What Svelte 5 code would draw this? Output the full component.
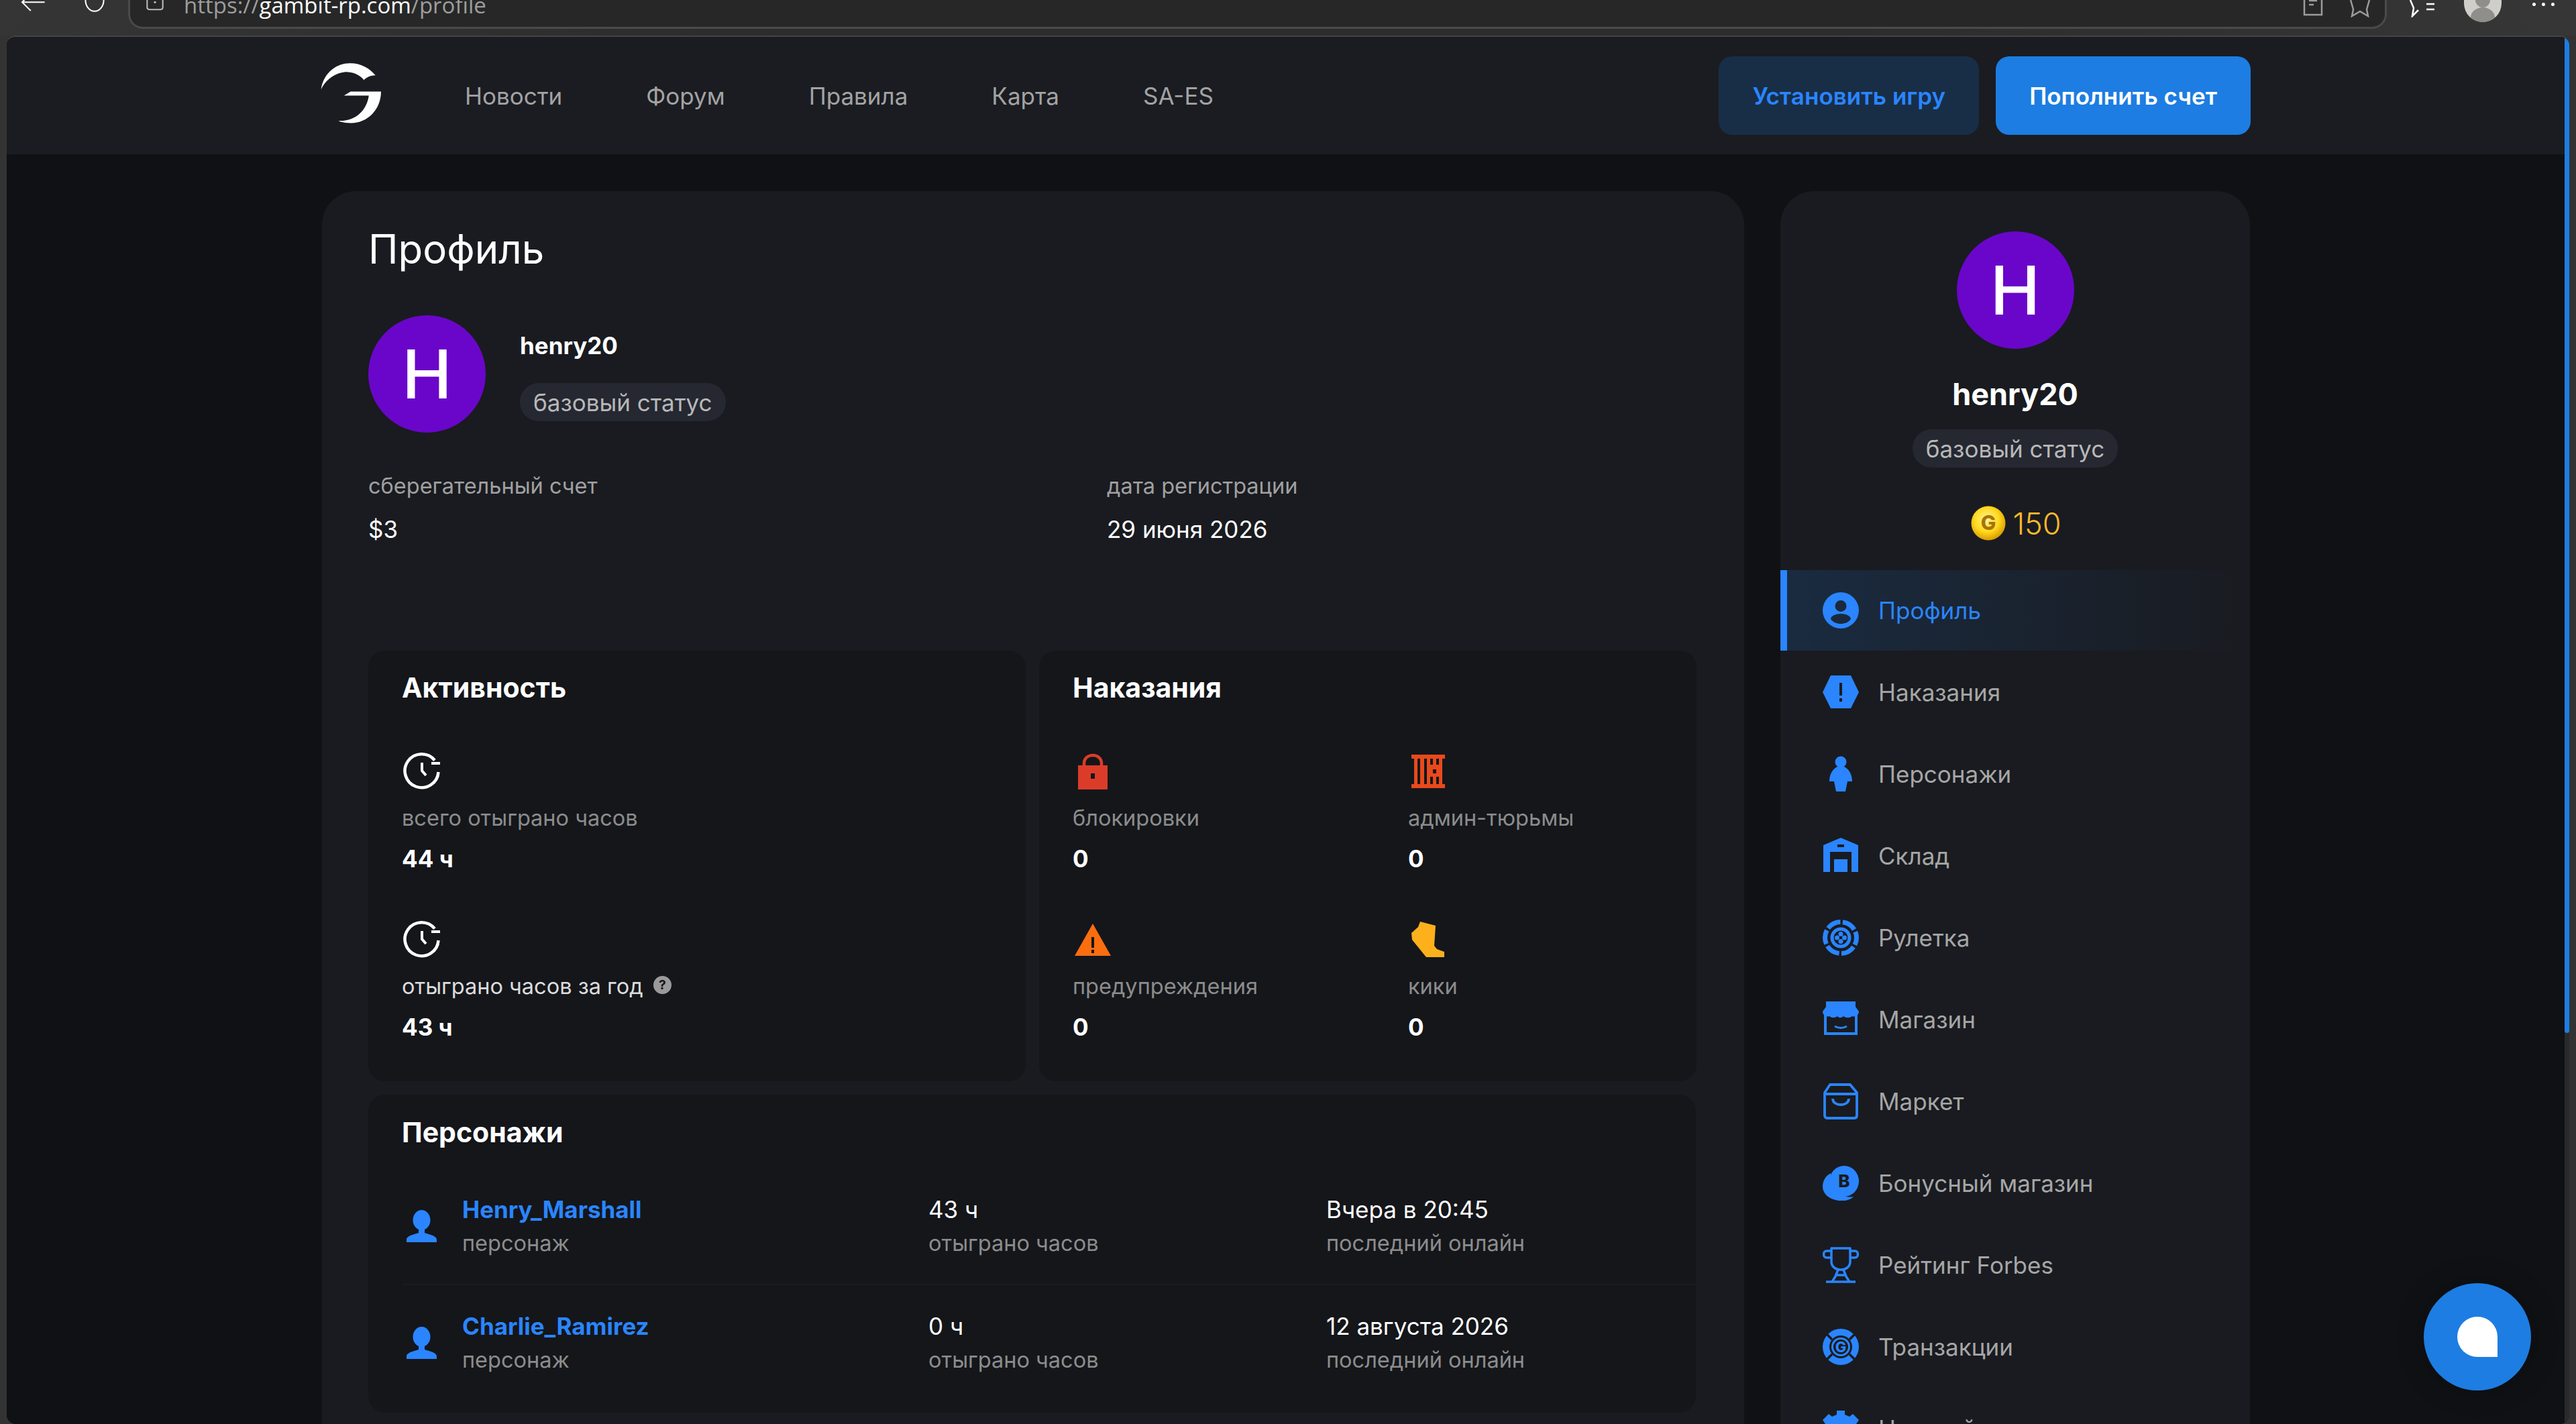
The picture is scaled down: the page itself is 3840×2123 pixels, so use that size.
<script>
  const menu = ['Новости', 'Форум', 'Правила', 'Карта', 'SA-ES'];
  const side = [
    { k: 'profile', t: 'Профиль', active: true },
    { k: 'ban', t: 'Наказания' },
    { k: 'person', t: 'Персонажи' },
    { k: 'store', t: 'Склад' },
    { k: 'chip', t: 'Рулетка' },
    { k: 'shop', t: 'Магазин' },
    { k: 'bag', t: 'Маркет' },
    { k: 'bonus', t: 'Бонусный магазин' },
    { k: 'cup', t: 'Рейтинг Forbes' },
    { k: 'tx', t: 'Транзакции' },
    { k: 'gear', t: 'Настройки' }
  ];
  const chars = [
    { n: 'Henry_Marshall', h: '43 ч', l: 'Вчера в 20:45' },
    { n: 'Charlie_Ramirez', h: '0 ч', l: '12 августа 2026' }
  ];
  const pun = [
    { k: 'lock', t: 'блокировки' },
    { k: 'jail', t: 'админ-тюрьмы' },
    { k: 'warn', t: 'предупреждения' },
    { k: 'kick', t: 'кики' }
  ];
</script>

{#snippet clock()}
  <svg class="ico60" viewBox="-3 -3 60 60" fill="none" stroke="#fff" stroke-width="4.5">
    <path d="M51.5 28A25 25 0 1 1 46 10.5" />
    <path d="M41 15H54M27 14V26L33 33" stroke-width="4" />
  </svg>
{/snippet}

{#snippet punIcon(k)}
  {#if k === 'lock'}
    <svg class="ico60" viewBox="0 0 60 60">
      <path fill="#db3c29" fill-rule="evenodd" d="M8 21H52V57H8ZM27 33V41H33V33Z" />
      <path fill="none" stroke="#db3c29" stroke-width="4.5" d="M17 22V15C17 -1 43 -1 43 15V22" transform="translate(0 3)" />
    </svg>
  {:else if k === 'jail'}
    <svg class="ico60" viewBox="0 0 60 60">
      <path fill="#e8491d" fill-rule="evenodd" d="M5 5H55V11H51V49H55V55H5V49H9V11H5ZM14 11V49H18V11ZM24 11V49H28V11ZM33 11V20H37V11ZM42 11V20H46V11ZM33 38V49H37V38ZM42 38V49H46V38ZM37 27H42V33H37Z" />
    </svg>
  {:else if k === 'warn'}
    <svg class="ico60" viewBox="0 0 60 60">
      <path fill="#fb6e10" fill-rule="evenodd" d="M30 6L57 54H3ZM28 26V42H32V26ZM28 45V50H32V45Z" />
    </svg>
  {:else}
    <svg class="ico60" viewBox="-5 -3 60 60">
      <path fill="#fcb01b" d="M13 0L36 6L34 36L38 41L49 45V53H22L1 27L0 17L10 8Z" />
    </svg>
  {/if}
{/snippet}

{#snippet navIcon(k)}
  <svg class="ico54" viewBox="0 0 54 54" fill="#2a85ff">
    {#if k === 'profile'}
      <path fill-rule="evenodd" d="M27 0A27 27 0 1 1 27 54A27 27 0 1 1 27 0ZM27 12A8.5 8.5 0 1 0 27 29A8.5 8.5 0 1 0 27 12ZM27 32C18 32 12 36 12 40C16 45 21 47 27 47C33 47 38 45 42 40C42 36 36 32 27 32Z" />
    {:else if k === 'ban'}
      <path fill-rule="evenodd" d="M12 2H42L54 27L42 51H12L0 27ZM25 13V32H29V13ZM25 36V41H29V36Z" />
    {:else if k === 'person'}
      <circle cx="27" cy="9" r="8.5" />
      <path d="M22 16C16 19 10 26 10 38H17L20 53H34L37 38H44C44 26 38 19 32 16Z" />
    {:else if k === 'store'}
      <path fill-rule="evenodd" d="M27 0L53 11V51H43V21H11V51H1V11ZM22 10V14H32V10Z" />
      <rect x="17" y="32" width="20" height="19" />
    {:else if k === 'chip'}
      <g fill="none" stroke="#2a85ff">
        <circle cx="27" cy="27" r="23.5" stroke-width="7" stroke-dasharray="21 3.6" stroke-dashoffset="10" />
        <circle cx="27" cy="27" r="13" stroke-width="5" />
      </g>
      <circle cx="21.500" cy="27" r="3.500" /><circle cx="32.500" cy="27" r="3.500" />
      <circle cx="27" cy="21.500" r="3.500" /><circle cx="27" cy="32.500" r="3.500" />
    {:else if k === 'shop'}
      <path d="M5 0H49V8L54 15C54 20 49 24 44 22C40 25 35 25 31 22C28 25 24 25 22 22C18 25 14 25 10 22C5 24 0 20 0 15L5 8Z" />
      <g fill="none" stroke="#2a85ff">
        <path d="M4 18V48H50V18" stroke-width="4" />
        <path d="M18 37Q27 42 36 37" stroke-width="3" />
      </g>
    {:else if k === 'bag'}
      <g fill="none" stroke="#2a85ff" stroke-width="3.800">
        <path d="M3 14L11 2H41L51 14V48Q51 52 47 52H7Q3 52 3 48Z" stroke-linejoin="round" />
        <path d="M3 16H51M15 23C15 35 39 35 39 23" />
      </g>
    {:else if k === 'bonus'}
      <path d="M12 12C4 16 0 24 0 32C0 46 16 54 30 53C36 53 42 51 46 47C30 50 10 40 12 12Z" />
      <ellipse cx="32" cy="24" rx="22" ry="23" />
      <text x="32" y="33" text-anchor="middle" class="coin-b">B</text>
    {:else if k === 'cup'}
      <g fill="none" stroke="#2a85ff" stroke-width="3.500" stroke-linejoin="round">
        <path d="M13 2H41V22C41 30 34 34 27 34C20 34 13 30 13 22Z" />
        <path d="M13 6H6C0 6 0 16 6 16H13M41 6H48C54 6 54 16 48 16H41" />
        <path d="M23 34L19 44L14 52M31 34L35 44L40 52M20 42H34M5 52H49" />
      </g>
    {:else if k === 'tx'}
      <circle cx="27" cy="27" r="27" />
      <g stroke="#191b20" stroke-width="3.500">
        <path d="M5 7L14 16M49 7L40 16M5 47L14 38M49 47L40 38" />
      </g>
      <circle cx="27" cy="27" r="17" fill="#191b20" />
      <circle cx="27" cy="27" r="14" />
      <circle cx="27" cy="27" r="11" fill="#191b20" />
      <text x="27" y="35" text-anchor="middle" class="coin-g">G</text>
    {:else}
      <path d="M21 0H33V6L40 9L45 5L54 14L50 20L54 27V33H0V27L4 20L0 14L9 5L14 9L21 6Z" />
    {/if}
  </svg>
{/snippet}

<div class="browser">
  <div class="toolbar">
    <svg class="t-back" viewBox="0 0 44 30" fill="none" stroke="#fff" stroke-width="2.500"><path d="M44 4H2M18 -12L2 4L18 20" /></svg>
    <svg class="t-reload" viewBox="0 0 38 30" fill="none" stroke="#fff" stroke-width="2.500"><path d="M2 0A17 21 0 0 0 36 0" /></svg>
    <div class="address">
      <svg class="t-site" viewBox="0 0 32 24" fill="none" stroke="#b9b9b9" stroke-width="2.500"><path d="M2 0V13Q2 17 6 17H26Q30 17 30 13V0" /><circle cx="16" cy="4" r="2" fill="#b9b9b9" stroke="none" /></svg>
      <span class="url"><i>https://</i>gambit-rp.com<i>/profile</i></span>
      <svg class="t-doc" viewBox="0 0 30 26" fill="none" stroke="#9c9c9c" stroke-width="2.500"><path d="M2 0V22H28V0M9 1H21M9 7H16" /></svg>
      <svg class="t-star" viewBox="0 0 40 26" fill="none" stroke="#9c9c9c" stroke-width="2.500"><path d="M6 0L10 14L8 24L20 17L32 24L30 14L34 0" /></svg>
    </div>
    <svg class="t-fav" viewBox="0 0 40 26" fill="none" stroke="#fff" stroke-width="2.500"><path d="M2 0L7 12L5 24L14 15M26 6H38M26 14H38" /></svg>
    <div class="t-avatar"><span></span><b></b></div>
    <div class="t-dots"><u></u><u></u><u></u></div>
  </div>

  <div class="pane">
    <div class="page">
      <header class="head">
        <div class="head-in">
          <svg class="logo" viewBox="113 100 272 272" fill="#fff">
            <path d="M115 220C125 150 180 102 245 102C295 102 335 125 360 157C340 158 322 164 308 178C285 150 250 140 220 142C170 148 130 185 115 220Z" />
            <path d="M218 248L248 230H385C385 310 325 372 250 372C225 372 205 368 192 362C265 365 320 320 330 248Z" />
          </svg>
          <nav class="menu">
            {#each menu as m}<span>{m}</span>{/each}
          </nav>
          <div class="btns">
            <span class="btn ghost">Установить игру</span>
            <span class="btn solid">Пополнить счет</span>
          </div>
        </div>
      </header>

      <div class="body">
        <main class="card main">
          <h1>Профиль</h1>
          <div class="user">
            <div class="avatar">H</div>
            <div class="who">
              <div class="uname">henry20</div>
              <div class="pill">базовый статус</div>
            </div>
          </div>
          <div class="meta">
            <div><div class="lab lab-a">сберегательный счет</div><div class="val">$3</div></div>
            <div><div class="lab lab-a">дата регистрации</div><div class="val">29 июня 2026</div></div>
          </div>

          <div class="two">
            <section class="inner box">
              <h2>Активность</h2>
              <div class="stats">
                <div class="stat">
                  {@render clock()}
                  <div class="lab">всего отыграно часов</div>
                  <div class="num">44 ч</div>
                </div>
                <div class="stat wide">
                  {@render clock()}
                  <div class="lab light">отыграно часов за год
                    <svg class="hint" viewBox="0 0 28 28"><circle cx="14" cy="14" r="14" fill="#9a9a9a" /><text x="14" y="21" text-anchor="middle" class="hint-q">?</text></svg>
                  </div>
                  <div class="num">43 ч</div>
                </div>
              </div>
            </section>
            <section class="inner box">
              <h2>Наказания</h2>
              <div class="stats">
                {#each pun as p}
                  <div class="stat">
                    {@render punIcon(p.k)}
                    <div class="lab">{p.t}</div>
                    <div class="num">0</div>
                  </div>
                {/each}
              </div>
            </section>
          </div>

          <section class="inner chars">
            <h2>Персонажи</h2>
            {#each chars as c}
              <div class="crow">
                <svg class="cicon" viewBox="0 0 45 48" fill="#2a85ff">
                  <ellipse cx="22.500" cy="15" rx="13" ry="15" />
                  <path d="M18 26H27V34C32 36 45 38 45 44V48H0V44C0 38 13 36 18 34Z" />
                </svg>
                <div class="c1"><div class="cname">{c.n}</div><div class="lab">персонаж</div></div>
                <div class="c2"><div class="cval">{c.h}</div><div class="lab">отыграно часов</div></div>
                <div class="c3"><div class="cval">{c.l}</div><div class="lab">последний онлайн</div></div>
              </div>
            {/each}
          </section>
        </main>

        <aside class="card aside">
          <div class="avatar">H</div>
          <div class="aname">henry20</div>
          <div class="pill">базовый статус</div>
          <div class="coins">
            <svg class="coin" viewBox="0 0 52 52">
              <defs>
                <radialGradient id="gold" cx="45%" cy="40%" r="60%">
                  <stop offset="0" stop-color="#fff3a0" /><stop offset=".6" stop-color="#ffd91c" /><stop offset="1" stop-color="#d99a05" />
                </radialGradient>
              </defs>
              <circle cx="26" cy="26" r="25.500" fill="url(#gold)" />
              <text x="26" y="36" text-anchor="middle" class="coin-letter">G</text>
            </svg>
            <span>150</span>
          </div>
          <nav class="snav">
            {#each side as s}
              <div class="sitem" class:active={s.active}>
                {@render navIcon(s.k)}
                <span>{s.t}</span>
              </div>
            {/each}
          </nav>
        </aside>
      </div>
      <div class="chat"><span></span></div>
    </div>
    <div class="scroll"><div class="thumb"></div></div>
  </div>
</div>

<style>
  :global(body) { margin: 0; background: #2e2e2e; }
  :global(html), :global(body) { overflow: hidden; }
  .browser {
    height: 2123px; width: 3840px; overflow: hidden; display: flex; flex-direction: column;
    background: #333; font-family: Inter, "Noto Sans", sans-serif; color: #fff;
  }
  /* toolbar */
  .toolbar { height: 53px; flex: none; display: flex; align-items: flex-start; background: linear-gradient(90deg, #353535, #2c2c2c 30%, #2c2c2c 70%, #363636); }
  .t-back { width: 44px; height: 24px; margin-left: 27px; }
  .t-reload { width: 38px; height: 24px; margin-left: 51px; }
  .address {
    margin-left: 31px; width: 3367px; height: 43px; box-sizing: border-box; background: #272727;
    border: 3px solid #4a4a4a; border-top: 0; border-radius: 0 0 22px 22px; display: flex; overflow: hidden;
  }
  .t-site { width: 32px; height: 20px; margin-left: 21px; flex: none; }
  .url { margin-left: 27px; font: 33px/36px "Open Sans", sans-serif; margin-top: -10px; color: #fff; white-space: nowrap; }
  .url i { font-style: normal; color: #9d9d9d; }
  .t-doc { width: 30px; height: 26px; margin-left: auto; }
  .t-star { width: 40px; height: 26px; margin: 0 17px 0 35px; }
  .t-fav { width: 40px; height: 26px; margin-left: 33px; }
  .t-avatar { width: 56px; height: 33px; margin-left: 42px; border-radius: 0 0 28px 28px; background: #cfcec9; overflow: hidden; position: relative; }
  .t-avatar span { display: block; width: 22px; height: 12px; margin: -1px auto 0; border-radius: 0 0 11px 11px; background: #8f8e8a; }
  .t-avatar b { display: block; width: 36px; height: 30px; margin: 0 auto; border-radius: 50%; background: #8f8e8a; }
  .t-dots { display: flex; gap: 9px; margin: 4px 0 0 46px; }
  .t-dots u { width: 5px; height: 5px; border-radius: 50%; background: #fff; }

  .pane {
    flex: 1; min-height: 0; display: flex; margin: 0 10px; border-top: 2px solid #444; border-radius: 14px 14px 14px 14px;
    overflow: hidden; background: #0f1114;
  }
  .page { flex: 1; min-width: 0; position: relative; overflow: hidden; background: #0f1114; }
  .scroll { width: 7px; flex: none; background: #2a2a2a; }
  .thumb { height: 1485px; background: #1d7de2; border-radius: 0 0 4px 4px; }

  /* header */
  .head { height: 175px; background: #1a1c21; }
  .head-in { margin-left: 468px; width: 2877px; height: 100%; display: flex; align-items: center; }
  .logo { width: 90px; height: 91px; flex: none; margin-top: -8px; }
  .menu { display: flex; gap: 125px; margin-left: 125px; font-size: 35px; color: #a3a3a3; }
  .btns { margin-left: auto; display: flex; gap: 25px; }
  .btn { height: 117px; display: flex; align-items: center; padding: 0 50px; border-radius: 20px; font-size: 35px; font-weight: 600; }
  .ghost { background: #182e47; color: #2a85ff; }
  .solid { background: #1d7de2; color: #fff; }

  .body { display: flex; gap: 54px; margin: 55px 0 0 470px; width: 2874px; align-items: flex-start; }
  .card { background: #191b20; border-radius: 50px; box-sizing: border-box; }
  .main { width: 2120px; padding: 50px 70px 0 69px; min-height: 1900px; }
  h1 { margin: 0; font-size: 60px; line-height: 72px; font-weight: 400; }
  .user { display: flex; gap: 51px; margin-top: 63px; }
  .avatar {
    width: 175px; height: 175px; flex: none; border-radius: 50%; background: #6a06ca; color: #fff;
    display: flex; align-items: center; justify-content: center; font-size: 100px; line-height: 1; font-weight: 500;
  }
  .who { padding-top: 21px; }
  .uname { font-size: 35px; line-height: 50px; font-weight: 700; margin-top: -1px; margin-bottom: 1px; }
  .pill { display: inline-block; box-sizing: border-box; height: 57px; line-height: 58px; padding: 0 20px; border-radius: 28px; background: #252831; color: #b8b8b8; font-size: 35px; }
  .who .pill { margin-top: 30px; }
  .meta { display: grid; grid-template-columns: 1101px 1fr; margin-top: 55px; }
  .lab { font-size: 32.500px; line-height: 50px; color: #8c8c8c; white-space: nowrap; }
  .lab-a { color: #a0a0a0; }
  .light { color: #dcdcdc; display: flex; align-items: center; gap: 15px; }
  .val { font-size: 35px; line-height: 50px; margin-top: 14px; }
  .two { display: grid; grid-template-columns: 980px 980px; gap: 20px; margin-top: 156px; }
  .inner { background: #14161a; border-radius: 25px; box-sizing: border-box; }
  .box { height: 642px; padding: 30px 50px 0; }
  h2 { margin: 0; font-size: 41px; line-height: 50px; font-weight: 700; }
  .stats { display: grid; grid-template-columns: 500px 1fr; row-gap: 66px; margin-top: 70px; }
  .wide { grid-column: 1 / 3; grid-row: 2; }
  .ico60 { display: block; width: 60px; height: 60px; }
  .stat .lab { margin-top: 15px; }
  .num { font-size: 35px; line-height: 50px; font-weight: 700; margin-top: 10px; }
  .hint { width: 27px; height: 27px; margin-top: -6px; }
  .hint-q { font-size: 20px; font-weight: 700; fill: #14161a; }
  .chars { margin-top: 20px; height: 474px; width: 1979px; padding: 31px 0 0 50px; }
  .chars h2 { margin-bottom: 29px; }
  .crow { height: 172px; display: flex; align-items: center; border-bottom: 2px solid #191b20; }
  .crow:last-child { border-bottom: 0; }
  .cicon { width: 45px; height: 48px; margin-left: 7px; flex: none; }
  .c1 { margin-left: 38px; width: 695px; }
  .c2 { width: 593px; }
  .cname { font-size: 35px; line-height: 49px; font-weight: 700; color: #2a85ff; }
  .cval { font-size: 35px; line-height: 49px; }
  .crow .lab { line-height: 49px; margin-top: 1px; margin-bottom: -1px; }

  .aside { width: 700px; height: 2000px; padding-top: 60px; display: flex; flex-direction: column; align-items: center; }
  .aname { font-size: 45px; line-height: 60px; font-weight: 700; margin-top: 38px; margin-bottom: 22px; }
  .coins { display: flex; align-items: center; gap: 10px; margin-top: 57px; margin-left: 3px; height: 52px; color: #fbb92b; font-size: 45px; font-weight: 300; }
  .coin { width: 52px; height: 52px; }
  .coin-letter { font: 800 30px Inter, sans-serif; fill: #a87400; }
  .coin-b { font: 800 26px Inter, sans-serif; fill: #191b20; }
  .coin-g { font: 800 22px Inter, sans-serif; fill: #2a85ff; }
  .snav { width: 100%; margin-top: 44px; display: flex; flex-direction: column; gap: 2px; }
  .sitem {
    height: 120px; flex: none; box-sizing: border-box; border-left: 10px solid transparent; padding-left: 53px;
    display: flex; align-items: center; gap: 29px; font-size: 35px; color: #a6a6a6;
  }
  .active { border-left-color: #2a85ff; color: #2a85ff; background: linear-gradient(90deg, #1a2b40, #191b20); }
  .ico54 { width: 54px; height: 54px; flex: none; }

  .chat {
    position: absolute; left: 3603px; top: 1858px; width: 160px; height: 160px; border-radius: 50%;
    background: #1d7de2; display: flex; align-items: center; justify-content: center; box-shadow: 0 0 40px rgba(0,0,0,.25);
  }
  .chat span { width: 60px; height: 60px; background: #fff; border-radius: 50% 50% 0 50%; }
</style>
